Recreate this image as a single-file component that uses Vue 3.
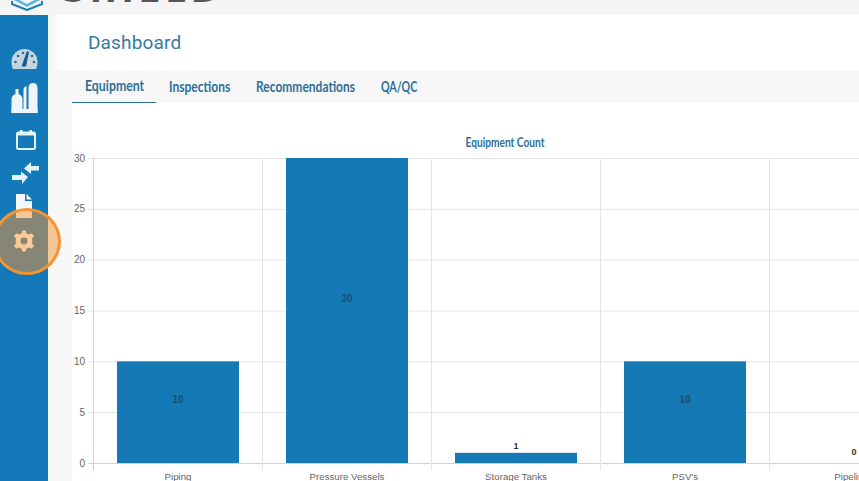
<script setup>
const tabs = [
  { label: 'Equipment', width: 59, scale: 0.82 },
  { label: 'Inspections', width: 61, scale: 0.8 },
  { label: 'Recommendations', width: 99, scale: 0.8 },
  { label: 'QA/QC', width: 36, scale: 0.71 }
]

const chartTop = 55
const chartBottom = 360
const yTicks = [0, 5, 10, 15, 20, 25, 30]

function yPos(value) {
  return chartBottom - (value / 30) * (chartBottom - chartTop)
}

const categories = [
  { name: 'Piping', value: 10 },
  { name: 'Pressure Vessels', value: 30 },
  { name: 'Storage Tanks', value: 1 },
  { name: "PSV's", value: 10 },
  { name: 'Pipelines', value: 0 }
]

function colLeft(i) {
  return 21 + i * 169
}

function labelY(value) {
  if (value === 0) return yPos(0) - 8
  if (value === 1) return yPos(1) - 4
  return yPos(value / 2) - 9
}
</script>

<template>
  <div class="page">
    <div class="topbar">
      <svg class="logo-mark" width="32" height="11" viewBox="0 0 32 11">
        <path d="M1 -4 L16 4 L31 -4 V-1 L16 7 L1 -1 Z" fill="#5cb8d8" />
        <path d="M1 1 V4 L16 10 L31 4 V1" fill="none" stroke="#1a7fb5" stroke-width="2" />
      </svg>
      <div class="logo-text">SHIELD</div>
    </div>

    <div class="layout">
      <nav class="sidebar">
        <div class="nav-item gauge">
          <svg width="27" height="22" viewBox="0 0 27 22">
            <path d="M0.5 14 A13 13 0 0 1 26.5 14 Q26.5 18 25 21 H2 Q0.5 18 0.5 14 Z" fill="#c4d6e2" />
            <path d="M16 3 L10.5 18.5 H15 L18 4 Z" fill="#17598a" />
            <g fill="#2d6f98">
              <circle cx="4.5" cy="14" r="1.3" />
              <circle cx="7" cy="8" r="1.3" />
              <circle cx="12" cy="5" r="1.3" />
              <circle cx="21" cy="8" r="1.3" />
              <circle cx="23" cy="14" r="1.3" />
            </g>
          </svg>
        </div>
        <div class="nav-item plant">
          <svg width="29" height="30" viewBox="0 0 29 30">
            <path d="M1.5 30 V16 Q2 12 5.5 11 V6 H8.5 V11 Q12 12 12.5 16 V30 Z" fill="#eef6fb" />
            <path d="M13.5 26 V7 Q13.5 4 16.5 3 V26 Z" fill="#eef6fb" />
            <path d="M18.5 30 V5 Q18.5 0 23 0 Q27.5 0 27.5 5 V30 Z" fill="#eef6fb" />
            <rect x="1.5" y="26" width="26" height="4" fill="#eef6fb" />
          </svg>
        </div>
        <div class="nav-item calendar">
          <svg width="20" height="20" viewBox="0 0 20 20">
            <rect x="1" y="2.5" width="18" height="16.5" rx="1.5" fill="none" stroke="#e4f2f9" stroke-width="2" />
            <rect x="1" y="2" width="18" height="3.5" fill="#e4f2f9" />
            <rect x="4" y="0" width="2.5" height="3" fill="#e4f2f9" />
            <rect x="13.5" y="0" width="2.5" height="3" fill="#e4f2f9" />
          </svg>
        </div>
        <div class="nav-item arrows">
          <svg width="27" height="22" viewBox="0 0 27 22">
            <path d="M0 13 H9 V9.5 L16 15 L10 22 V18 H0 Z" fill="#e4f2f9" />
            <path d="M27 4 H19 V0 L12 6.5 L19 12 V8.5 H27 Z" fill="#e4f2f9" />
          </svg>
        </div>
        <div class="nav-item doc">
          <svg width="16" height="24" viewBox="0 0 16 24">
            <path d="M0 0 H9 V7 H16 V24 H0 Z" fill="#f2f8fc" />
            <path d="M10.5 0 L16 5.5 H10.5 Z" fill="#f2f8fc" />
          </svg>
        </div>
        <div class="nav-item cog">
          <svg width="22" height="22" viewBox="0 0 24 24">
            <path
              fill="#ffffff"
              fill-rule="evenodd"
              d="M10 0.5 H14 L14.7 3.7 Q16.2 4.2 17.4 5 L20.3 3.5 L23 6.9 L20.7 9.2 Q21.1 10.5 21 12 Q21.1 13.5 20.7 14.8 L23 17.1 L20.3 20.5 L17.4 19 Q16.2 19.8 14.7 20.3 L14 23.5 H10 L9.3 20.3 Q7.8 19.8 6.6 19 L3.7 20.5 L1 17.1 L3.3 14.8 Q2.9 13.5 3 12 Q2.9 10.5 3.3 9.2 L1 6.9 L3.7 3.5 L6.6 5 Q7.8 4.2 9.3 3.7 Z M12 8.2 A3.8 3.8 0 1 0 12 15.8 A3.8 3.8 0 1 0 12 8.2 Z"
            />
          </svg>
        </div>
      </nav>

      <main class="main">
        <header class="header">
          <h1 class="title">Dashboard</h1>
        </header>

        <div class="body">
          <div class="tabs">
            <div v-for="(tab, i) in tabs" :key="tab.label" class="tab" :class="{ active: i === 0 }">
              <span class="tab-label" :style="{ width: tab.width + 'px', transform: 'scaleX(' + tab.scale + ')' }">{{ tab.label }}</span>
            </div>
          </div>

          <svg class="chart" width="787" height="378" viewBox="0 0 787 378">
            <text class="chart-title" x="433" y="44" text-anchor="middle" textLength="79" lengthAdjust="spacingAndGlyphs">Equipment Count</text>

            <g v-for="t in yTicks" :key="t">
              <line class="grid" :class="{ axis: t === 0 }" x1="16" x2="787" :y1="yPos(t) + 0.5" :y2="yPos(t) + 0.5" />
              <text class="tick" x="13" :y="yPos(t) + 3.5" text-anchor="end">{{ t }}</text>
            </g>

            <g v-for="(c, i) in categories" :key="c.name">
              <line class="grid" :class="{ axis: i === 0 }" :x1="colLeft(i) + 0.5" :x2="colLeft(i) + 0.5" :y1="chartTop" :y2="chartBottom + 7" />
              <rect v-if="c.value" class="bar" :x="colLeft(i) + 24" :y="yPos(c.value)" width="122" :height="chartBottom - yPos(c.value)" />
              <text
                class="value"
                :class="{ inside: c.value > 1 }"
                :x="colLeft(i) + 85"
                :y="labelY(c.value)"
                text-anchor="middle"
              >{{ c.value }}</text>
              <text class="tick cat" :x="colLeft(i) + 85" y="377" text-anchor="middle">{{ c.name }}</text>
            </g>
          </svg>
        </div>
      </main>
    </div>

    <div class="highlight"></div>
  </div>
</template>

<style scoped>
.page {
  position: relative;
  width: 859px;
  height: 481px;
  overflow: hidden;
  background: #f7f7f7;
  font-family: "Liberation Sans", Arial, sans-serif;
}

.topbar {
  height: 15px;
  background: #f5f5f5;
  display: flex;
  overflow: hidden;
}

.logo-mark {
  margin-left: 11px;
  flex-shrink: 0;
}

.logo-text {
  margin-left: 21px;
  margin-top: -23px;
  height: 28px;
  font-family: "DejaVu Sans", sans-serif;
  font-size: 32px;
  line-height: 28px;
  font-weight: 700;
  font-style: italic;
  letter-spacing: 5px;
  color: #555;
}

.layout {
  display: flex;
  height: 466px;
}

.sidebar {
  width: 48px;
  flex-shrink: 0;
  background: #1479b8;
  display: flex;
  flex-direction: column;
  align-items: center;
  padding-top: 33px;
}

.nav-item {
  display: flex;
  justify-content: center;
  align-items: center;
  flex-shrink: 0;
}

.nav-item svg {
  display: block;
}

.gauge {
  height: 22px;
  margin-bottom: 13px;
}

.plant {
  height: 30px;
  margin-bottom: 17px;
}

.calendar {
  height: 20px;
  margin-bottom: 12px;
  margin-left: 3px;
}

.arrows {
  height: 22px;
  margin-bottom: 10px;
  margin-left: 2px;
}

.doc {
  height: 24px;
  margin-bottom: 12px;
}

.cog {
  height: 22px;
}

.main {
  flex: 1;
  min-width: 0;
  display: flex;
  flex-direction: column;
}

.header {
  height: 56px;
  flex-shrink: 0;
  background: linear-gradient(90deg, #f3f3f3, #fff 14px);
  padding: 16px 0 0 40px;
  box-sizing: border-box;
}

.title {
  margin: 0;
  font-family: Roboto, sans-serif;
  font-size: 19px;
  line-height: 24px;
  font-weight: 400;
  letter-spacing: 0.15px;
  color: #347aa3;
}

.body {
  flex: 1;
  margin-left: 24px;
  background: #fff;
  min-height: 0;
}

.tabs {
  height: 32px;
  background: #f7f7f7;
  display: flex;
}

.tab {
  box-sizing: border-box;
  height: 32px;
  display: flex;
  align-items: center;
  padding: 0 13px 2px;
}

.tab.active {
  border-bottom: 1px solid #2a6f9a;
  padding: 0 12px 3px 13px;
}

.tab-label {
  display: inline-block;
  font-family: Lato, sans-serif;
  font-size: 15px;
  font-weight: 700;
  color: #2f6f98;
  white-space: nowrap;
  transform-origin: 0 50%;
}

.chart {
  display: block;
}

.chart-title {
  font-family: Lato, sans-serif;
  font-size: 13px;
  font-weight: 700;
  fill: #2f6f98;
}

.grid {
  stroke: #e4e4e4;
  stroke-width: 1;
}

.grid.axis {
  stroke: #d2d2d2;
}

.tick {
  font-size: 10px;
  fill: #666;
}

.tick.cat {
  font-size: 9.7px;
}

.bar {
  fill: #1479b5;
}

.value {
  font-size: 9px;
  font-weight: 700;
  fill: #333;
}

.value.inside {
  font-size: 10px;
  fill: #174f76;
}

.highlight {
  position: absolute;
  left: -7px;
  top: 208px;
  width: 68px;
  height: 67px;
  box-sizing: border-box;
  border: 3px solid #f59331;
  border-radius: 50%;
  background: rgba(245, 147, 49, 0.5);
}
</style>
